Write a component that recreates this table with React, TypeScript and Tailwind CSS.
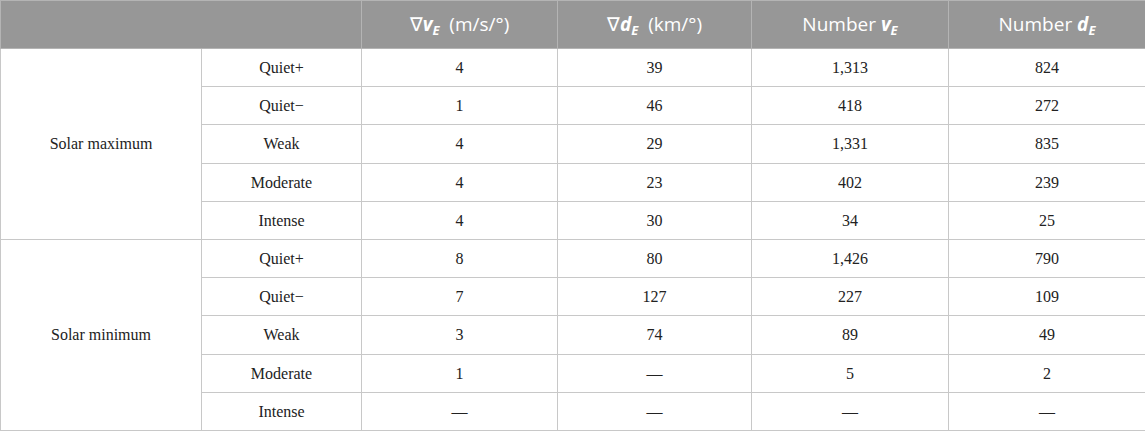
import React from 'react'

type Row = { group?: string; label: string; gv: string; gd: string; nv: string; nd: string }

const rows: Row[] = [
  { group: 'Solar maximum', label: 'Quiet+', gv: '4', gd: '39', nv: '1,313', nd: '824' },
  { label: 'Quiet\u2212', gv: '1', gd: '46', nv: '418', nd: '272' },
  { label: 'Weak', gv: '4', gd: '29', nv: '1,331', nd: '835' },
  { label: 'Moderate', gv: '4', gd: '23', nv: '402', nd: '239' },
  { label: 'Intense', gv: '4', gd: '30', nv: '34', nd: '25' },
  { group: 'Solar minimum', label: 'Quiet+', gv: '8', gd: '80', nv: '1,426', nd: '790' },
  { label: 'Quiet\u2212', gv: '7', gd: '127', nv: '227', nd: '109' },
  { label: 'Weak', gv: '3', gd: '74', nv: '89', nd: '49' },
  { label: 'Moderate', gv: '1', gd: '\u2014', nv: '5', nd: '2' },
  { label: 'Intense', gv: '\u2014', gd: '\u2014', nv: '\u2014', nd: '\u2014' },
]

// bold italic symbol with a bold italic subscript E
function Sym(props: { s: string }) {
  return (
    <span className="font-bold italic">
      {props.s}
      <sub className="text-[13px] font-bold italic">E</sub>
    </span>
  )
}

export default function App() {
  const cell = 'border border-[#c8c8c8] text-center align-middle'
  const head = 'border border-[#b4b4b4] font-normal'
  return (
    <div className="w-[1145px] h-[433px] bg-white">
      <table className="w-[1145px] table-fixed border-collapse font-['Liberation_Serif',serif] text-[16px] text-[#222]">
        <colgroup>
          <col className="w-[201px]" />
          <col className="w-[160px]" />
          <col className="w-[196px]" />
          <col className="w-[194px]" />
          <col className="w-[197px]" />
          <col className="w-[197px]" />
        </colgroup>
        <thead>
          <tr className="h-[48px] bg-[#979797] font-['Open_Sans',sans-serif] text-[19px] text-white">
            <th colSpan={2} className={head} />
            <th className={head}>
              ∇<Sym s="v" />&nbsp; (m/s/°)
            </th>
            <th className={head}>
              ∇<Sym s="d" />&nbsp; (km/°)
            </th>
            <th className={head}>
              Number <Sym s="v" />
            </th>
            <th className={head}>
              Number <Sym s="d" />
            </th>
          </tr>
        </thead>
        <tbody>
          {rows.map((r, i) => (
            <tr key={i} className={i % 5 === 2 ? 'h-[39px]' : 'h-[38px]'}>
              {r.group && (
                <td rowSpan={5} className={cell}>
                  {r.group}
                </td>
              )}
              <td className={cell}>{r.label}</td>
              <td className={cell}>{r.gv}</td>
              <td className={cell}>{r.gd}</td>
              <td className={cell}>{r.nv}</td>
              <td className={cell}>{r.nd}</td>
            </tr>
          ))}
        </tbody>
      </table>
    </div>
  )
}
